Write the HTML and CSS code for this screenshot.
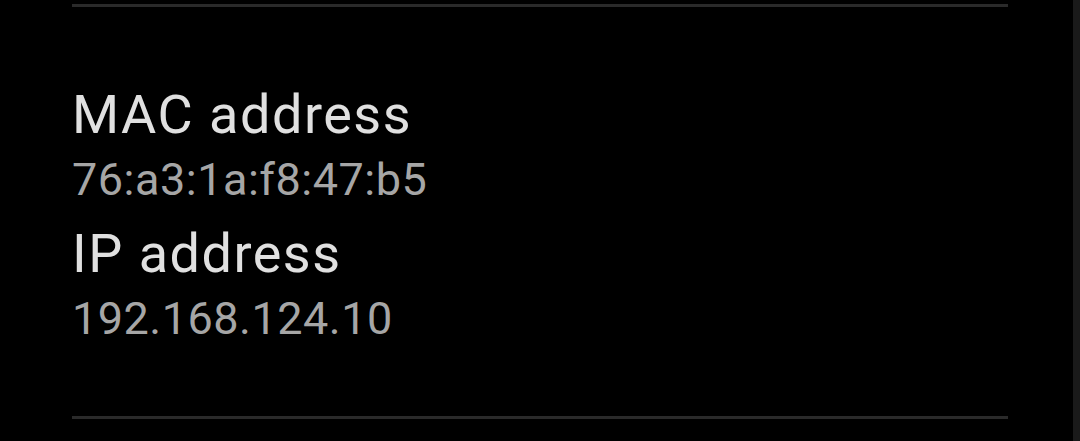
FILE: index.html
```html
<!DOCTYPE html>
<html lang="en">
<head>
<meta charset="utf-8">
<title>Network details</title>
<link rel="stylesheet" href="styles.css">
</head>
<body>
<div class="screen">
  <main class="panel">
    <div class="divider"></div>
    <section class="info">
      <div class="item">
        <div class="label">MAC address</div>
        <div class="value">76:a3:1a:f8:47:b5</div>
      </div>
      <div class="item">
        <div class="label">IP address</div>
        <div class="value">192.168.124.10</div>
      </div>
    </section>
    <div class="divider"></div>
  </main>
  <div class="scrollbar"></div>
</div>
</body>
</html>
```

FILE: styles.css
```css
html, body {
  margin: 0;
  padding: 0;
  background: #000;
}
body {
  font-family: Roboto, "Noto Sans", "Liberation Sans", sans-serif;
  width: 1080px;
  height: 441px;
  overflow: hidden;
}
.screen {
  display: flex;
  height: 441px;
}
.panel {
  flex: 1;
  display: flex;
  flex-direction: column;
  padding: 4px 65px 0 72px;
}
.divider {
  height: 3px;
  background: #2a2a2a;
  width: 936px;
}
.info {
  display: flex;
  flex-direction: column;
  gap: 14px;
  padding: 77px 0 68px 0;
}
.item {
  display: flex;
  flex-direction: column;
  gap: 5px;
}
.label {
  font-size: 54px;
  line-height: 62px;
  letter-spacing: 1.5px;
  color: #e0e0e0;
}
.value {
  font-size: 45px;
  line-height: 58px;
  letter-spacing: 0.5px;
  color: #a6a6a6;
}
.scrollbar {
  width: 7px;
  background: #1a1a1a;
}
```
